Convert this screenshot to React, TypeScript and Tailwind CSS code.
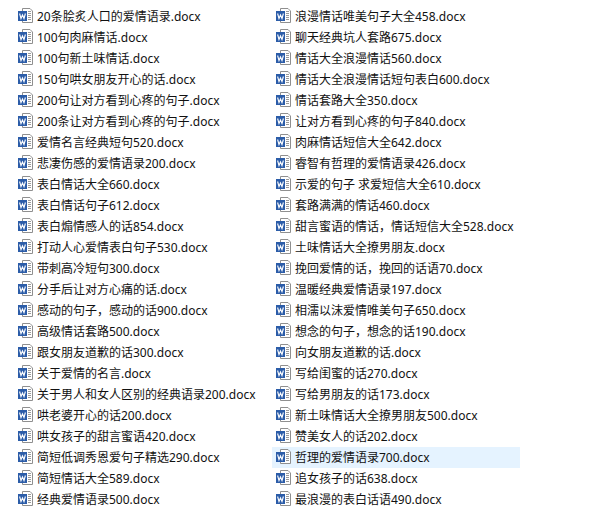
import React from 'react';

const leftFiles = [
  '20条脍炙人口的爱情语录.docx',
  '100句肉麻情话.docx',
  '100句新土味情话.docx',
  '150句哄女朋友开心的话.docx',
  '200句让对方看到心疼的句子.docx',
  '200条让对方看到心疼的句子.docx',
  '爱情名言经典短句520.docx',
  '悲凄伤感的爱情语录200.docx',
  '表白情话大全660.docx',
  '表白情话句子612.docx',
  '表白煽情感人的话854.docx',
  '打动人心爱情表白句子530.docx',
  '带刺高冷短句300.docx',
  '分手后让对方心痛的话.docx',
  '感动的句子，感动的话900.docx',
  '高级情话套路500.docx',
  '跟女朋友道歉的话300.docx',
  '关于爱情的名言.docx',
  '关于男人和女人区别的经典语录200.docx',
  '哄老婆开心的话200.docx',
  '哄女孩子的甜言蜜语420.docx',
  '简短低调秀恩爱句子精选290.docx',
  '简短情话大全589.docx',
  '经典爱情语录500.docx',
];

const rightFiles = [
  '浪漫情话唯美句子大全458.docx',
  '聊天经典坑人套路675.docx',
  '情话大全浪漫情话560.docx',
  '情话大全浪漫情话短句表白600.docx',
  '情话套路大全350.docx',
  '让对方看到心疼的句子840.docx',
  '肉麻情话短信大全642.docx',
  '睿智有哲理的爱情语录426.docx',
  '示爱的句子 求爱短信大全610.docx',
  '套路满满的情话460.docx',
  '甜言蜜语的情话，情话短信大全528.docx',
  '土味情话大全撩男朋友.docx',
  '挽回爱情的话，挽回的话语70.docx',
  '温暖经典爱情语录197.docx',
  '相濡以沫爱情唯美句子650.docx',
  '想念的句子，想念的话190.docx',
  '向女朋友道歉的话.docx',
  '写给闺蜜的话270.docx',
  '写给男朋友的话173.docx',
  '新土味情话大全撩男朋友500.docx',
  '赞美女人的话202.docx',
  '哲理的爱情语录700.docx',
  '追女孩子的话638.docx',
  '最浪漫的表白话语490.docx',
];

const WordIcon = () => (
  <svg width="16" height="15" viewBox="0 0 16 15" className="mb-[2px] shrink-0">
    <path d="M4.5 .5H12L14.5 3V14.5H4.5Z" fill="#fff" stroke="#8f8f8f" />
    <path d="M10 3.5H13M10 5.5H13M10 7.5H13M10 9.5H13M10 11.5H13" stroke="#9a9a9a" />
    <rect x="0" y="3" width="9" height="10" fill="#2b5ca8" />
    <path d="M1.6 5.5L3 10.5L4.5 7L6 10.5L7.4 5.5" fill="none" stroke="#fff" strokeWidth="1.1" />
  </svg>
);

const FileRow = ({ name, selected }: { name: string; selected?: boolean }) => (
  <div className={`flex h-[21px] items-center gap-[3px] pl-1 ${selected ? 'bg-[#e5f3ff]' : ''}`}>
    <WordIcon />
    <span className="whitespace-nowrap text-xs text-[#111111]">{name}</span>
  </div>
);

export default function App() {
  return (
    <div className="h-[529px] w-[609px] bg-white pl-[14px] pt-[6px] font-['Noto_Sans','Noto_Sans_CJK_SC',sans-serif]">
      <div className="grid w-[506px] grid-cols-[258px_248px]">
        <div className="flex flex-col">
          {leftFiles.map(f => <FileRow key={f} name={f} />)}
        </div>
        <div className="flex flex-col">
          {rightFiles.map(f => <FileRow key={f} name={f} selected={f.startsWith('哲理')} />)}
        </div>
      </div>
    </div>
  );
}
